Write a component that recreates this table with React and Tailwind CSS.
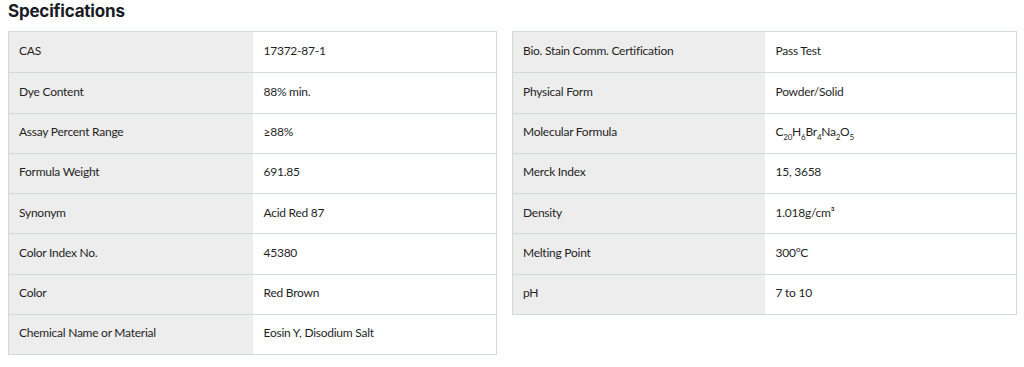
import React from 'react'

const left = [
  ['CAS', '17372-87-1'],
  ['Dye Content', '88% min.'],
  ['Assay Percent Range', '≥88%'],
  ['Formula Weight', '691.85'],
  ['Synonym', 'Acid Red 87'],
  ['Color Index No.', '45380'],
  ['Color', 'Red Brown'],
  ['Chemical Name or Material', 'Eosin Y, Disodium Salt'],
]

const formula = (
  <span>
    C<sub className="text-[8px] align-[-2px]">20</sub>H<sub className="text-[8px] align-[-2px]">6</sub>Br<sub className="text-[8px] align-[-2px]">4</sub>Na<sub className="text-[8px] align-[-2px]">2</sub>O<sub className="text-[8px] align-[-2px]">5</sub>
  </span>
)

const right = [
  ['Bio. Stain Comm. Certification', 'Pass Test'],
  ['Physical Form', 'Powder/Solid'],
  ['Molecular Formula', formula],
  ['Merck Index', '15, 3658'],
  ['Density', '1.018g/cm³'],
  ['Melting Point', '300°C'],
  ['pH', '7 to 10'],
]

function SpecTable({rows, width}){
  return (
    <div className={`border border-[#d3d8db] ${width}`}>
      {rows.map(([k, v], i)=>(
        <div key={i} className={`flex h-[40.25px] ${i > 0 ? 'border-t border-[#d3d8db]' : ''}`}>
          <div className="w-1/2 bg-[#eeeded] pl-[10px] pb-[2px] flex items-center">{k}</div>
          <div className="w-1/2 bg-white pl-[11px] pb-[2px] flex items-center">{v}</div>
        </div>
      ))}
    </div>
  )
}

export default function App(){
  return (
    <div className="bg-white h-[367px] pl-[8px] text-[12px] tracking-[-0.25px] text-[#1f1f1f]" style={{fontFamily: 'Lato, "Liberation Sans", sans-serif'}}>
      <h2 className="text-[17px] font-bold leading-[22px] h-[31px] tracking-[-0.2px] text-[#1b1b25]" style={{fontFamily: 'Inter, "Liberation Sans", sans-serif'}}>Specifications</h2>
      <div className="flex items-start gap-[15px]">
        <SpecTable rows={left} width="w-[489px]" />
        <SpecTable rows={right} width="w-[505px]" />
      </div>
    </div>
  )
}
